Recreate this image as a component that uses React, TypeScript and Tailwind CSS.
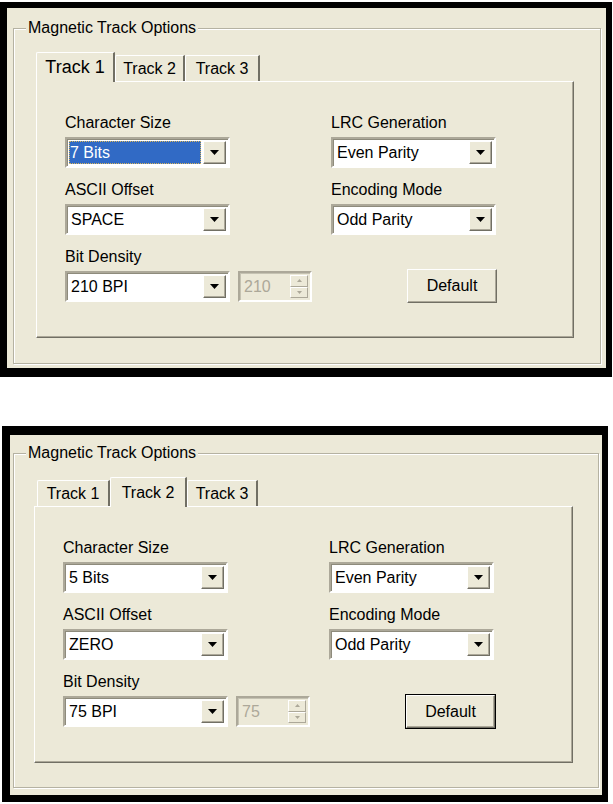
type Tab = { label: string; w: string; selected?: boolean; text?: string };

type PanelProps = {
  frame: string;
  fieldset: string;
  body: string;
  strip: string;
  tabs: Tab[];
  charSize: string;
  ascii: string;
  density: string;
  spin: string;
  focusCombo?: boolean;
  focusDefault?: boolean;
};

function Arrow() {
  return (
    <svg width="9" height="5" viewBox="0 0 9 5">
      <path d="M0 0h9L4.5 5z" fill="#000" />
    </svg>
  );
}

function Combo({ value, focused }: { value: string; focused?: boolean }) {
  return (
    <div className="w-[165px] h-[31px] border-2 border-t-[#aca899] border-l-[#aca899] border-b-white border-r-white">
      <div className="h-full flex bg-white p-[2px] shadow-[inset_1px_1px_0_#8e8b7c]">
        {focused ? (
          <div className="flex-1 mr-[2px] flex items-center bg-[#316ac5] text-white border border-dotted border-[#d8b55c]">
            {value}
          </div>
        ) : (
          <div className="flex-1 mr-[2px] flex items-center px-[2px]">{value}</div>
        )}
        <div className="w-[23px] flex items-center justify-center bg-[#ece9d8] border border-t-white border-l-white border-r-[#716f64] border-b-[#716f64] shadow-[inset_-1px_-1px_0_#aca899]">
          <Arrow />
        </div>
      </div>
    </div>
  );
}

function Spinner({ value }: { value: string }) {
  return (
    <div className="w-[74px] h-[31px] border-2 border-t-[#aca899] border-l-[#aca899] border-b-white border-r-white">
      <div className="h-full flex bg-[#ece9d8] p-[2px] shadow-[inset_1px_1px_0_#c5c2b2]">
        <div className="flex-1 flex items-center px-[2px] text-[#aca899]">{value}</div>
        <div className="w-[18px] flex flex-col">
          <div className="flex-1 flex items-center justify-center border border-t-white border-l-white border-r-[#aca899] border-b-[#aca899]">
            <svg width="5" height="3" viewBox="0 0 5 3">
              <path d="M0 3h5L2.5 0z" fill="#aca899" />
            </svg>
          </div>
          <div className="flex-1 flex items-center justify-center border border-t-white border-l-white border-r-[#aca899] border-b-[#aca899]">
            <svg width="5" height="3" viewBox="0 0 5 3">
              <path d="M0 0h5L2.5 3z" fill="#aca899" />
            </svg>
          </div>
        </div>
      </div>
    </div>
  );
}

function DefaultButton({ focused }: { focused?: boolean }) {
  return (
    <div className={focused ? "w-[91px] h-[35px] border border-black" : "w-[90px] h-[34px]"}>
      <div className="h-full flex items-center justify-center bg-[#ece9d8] border border-t-white border-l-white border-r-[#716f64] border-b-[#716f64] shadow-[inset_-1px_-1px_0_#aca899]">
        Default
      </div>
    </div>
  );
}

function Field({ label, children }: { label: string; children: React.ReactNode }) {
  return (
    <div className="flex flex-col gap-[5px]">
      <div className="h-[18px] leading-[18px]">{label}</div>
      {children}
    </div>
  );
}

function Panel(p: PanelProps) {
  return (
    <div className={`bg-black ${p.frame}`}>
      <div className="bg-[#ece9d8] flow-root">
        <fieldset className={`border border-[#b5b2a2] shadow-[inset_1px_1px_0_white,1px_1px_0_white] ${p.fieldset}`}>
          <legend className="ml-[12px] px-[2px] h-[18px] leading-[18px] bg-[#ece9d8]">
            Magnetic Track Options
          </legend>

          <div className={p.body}>
            {/* tab strip */}
            <div className={`flex items-end h-[29px] ${p.strip}`}>
              {p.tabs.map((t) =>
                t.selected ? (
                  <div
                    key={t.label}
                    className={`${t.w} h-[30px] -mb-px relative z-10 bg-[#ece9d8] rounded-tl-[2px] border-t border-l border-r-2 border-t-white border-l-white border-r-[#716f64] flex justify-center ${t.text ?? "pt-[3px]"}`}
                  >
                    {t.label}
                  </div>
                ) : (
                  <div
                    key={t.label}
                    className={`${t.w} h-[26px] rounded-tl-[2px] border-t border-l border-r-2 border-t-white border-l-white border-r-[#716f64] flex justify-center pt-[1px]`}
                  >
                    {t.label}
                  </div>
                )
              )}
            </div>

            {/* tab page */}
            <div className="h-[257px] border border-t-white border-l-white border-r-[#716f64] border-b-[#716f64] shadow-[inset_-1px_-1px_0_#aca899] pt-[32px] pl-[28px]">
              <div className="grid grid-cols-[266px_166px] gap-y-[13px]">
                <Field label="Character Size">
                  <Combo value={p.charSize} focused={p.focusCombo} />
                </Field>
                <Field label="LRC Generation">
                  <Combo value="Even Parity" />
                </Field>
                <Field label="ASCII Offset">
                  <Combo value={p.ascii} />
                </Field>
                <Field label="Encoding Mode">
                  <Combo value="Odd Parity" />
                </Field>
                <Field label="Bit Density">
                  <div className="flex gap-[8px]">
                    <Combo value={p.density} />
                    <Spinner value={p.spin} />
                  </div>
                </Field>
                <div className="pt-[21px] pl-[76px]">
                  <DefaultButton focused={p.focusDefault} />
                </div>
              </div>
            </div>
          </div>
        </fieldset>
      </div>
    </div>
  );
}

export default function App() {
  return (
    <div
      className="w-[613px] h-[804px] bg-white text-black text-[16px] overflow-hidden"
      style={{ fontFamily: '"Liberation Sans", Arial, sans-serif' }}
    >
      <div className="pt-[2px] w-[612px]">
        <Panel
          frame="pt-[6px] pl-[7px] pr-[6px] pb-[9px]"
          fieldset="mt-[11px] ml-[6px] mr-[5px] mb-[4px]"
          body="pt-[15px] pl-[22px] pr-[26px] pb-[25px]"
          strip=""
          tabs={[
            { label: "Track 1", w: "w-[79px]", selected: true, text: "pt-[1px] text-[18px]" },
            { label: "Track 2", w: "w-[70px]" },
            { label: "Track 3", w: "w-[75px]" },
          ]}
          charSize="7 Bits"
          ascii="SPACE"
          density="210 BPI"
          spin="210"
          focusCombo
        />
      </div>

      <div className="mt-[49px] ml-[2px] w-[606px]">
        <Panel
          frame="pt-[9px] pl-[8px] pr-[6px] pb-[7px]"
          fieldset="mt-[9px] ml-[3px] mr-[3px] mb-[7px]"
          body="pt-[15px] pl-[20px] pr-[25px] pb-[24px]"
          strip="pl-[3px]"
          tabs={[
            { label: "Track 1", w: "w-[73px]" },
            { label: "Track 2", w: "w-[77px]", selected: true },
            { label: "Track 3", w: "w-[71px]" },
          ]}
          charSize="5 Bits"
          ascii="ZERO"
          density="75 BPI"
          spin="75"
          focusDefault
        />
      </div>
    </div>
  );
}
